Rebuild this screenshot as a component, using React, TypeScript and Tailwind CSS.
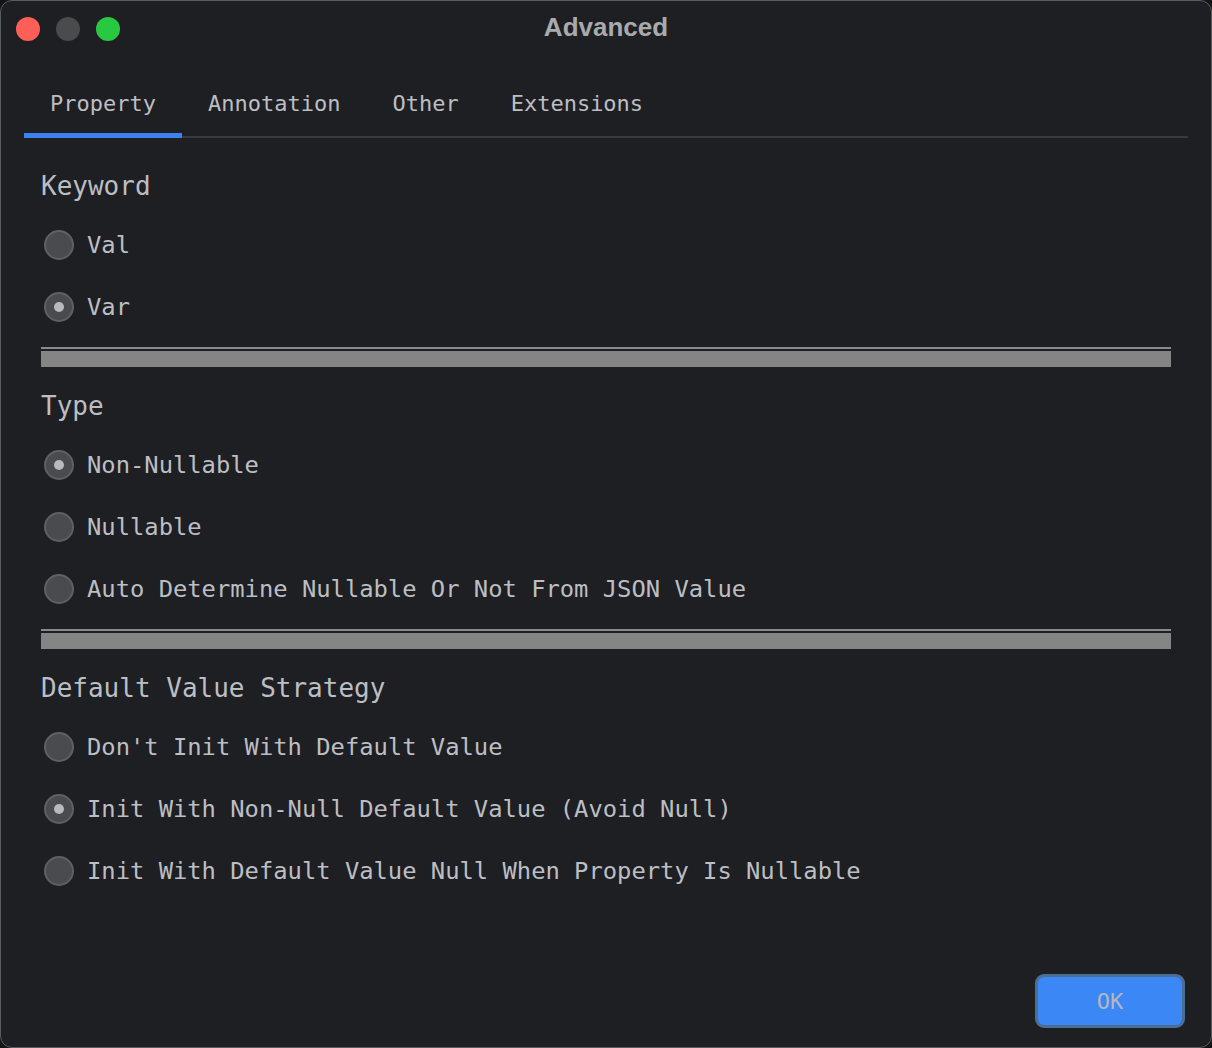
import { useState } from 'react';

const mono = { fontFamily: '"DejaVu Sans Mono", "Liberation Mono", monospace' };

type Group = { title: string; options: string[]; selected: number };

const groups: Group[] = [
  { title: 'Keyword', options: ['Val', 'Var'], selected: 1 },
  {
    title: 'Type',
    options: ['Non-Nullable', 'Nullable', 'Auto Determine Nullable Or Not From JSON Value'],
    selected: 0,
  },
  {
    title: 'Default Value Strategy',
    options: [
      "Don't Init With Default Value",
      'Init With Non-Null Default Value (Avoid Null)',
      'Init With Default Value Null When Property Is Nullable',
    ],
    selected: 1,
  },
];

function Radio({ checked, label, onClick }: { checked: boolean; label: string; onClick: () => void }) {
  return (
    <button className="flex h-[62px] items-center gap-[13px] pl-[3px] text-left" onClick={onClick} type="button">
      <span className="flex h-[30px] w-[30px] items-center justify-center rounded-full border-2 border-[#5f6064] bg-[#4a4b4e]">
        {checked && <span className="h-[10px] w-[10px] rounded-full bg-[#b9babd]" />}
      </span>
      <span className="text-[23.8px] leading-[30px] text-[#bcbec4]">{label}</span>
    </button>
  );
}

function Separator() {
  return (
    <div className="mt-[9px] mb-[23px] flex flex-col gap-[2px]">
      <div className="h-[2px] bg-[#8a8a8a]" />
      <div className="h-[16px] bg-[#858585]" />
    </div>
  );
}

export default function App() {
  const [tab, setTab] = useState('Property');
  const [picked, setPicked] = useState(groups.map((g) => g.selected));

  return (
    <div className="h-[1048px] w-full bg-[#141414]" style={mono}>
      <div className="flex h-full flex-col rounded-[12px] border border-[#5b5b5d] bg-[#1e1f22]">
        <div className="relative flex h-[55px] items-center px-[15px]">
          <div className="flex gap-[16px]">
            <span className="h-[24px] w-[24px] rounded-full bg-[#ff5f57]" />
            <span className="h-[24px] w-[24px] rounded-full bg-[#4a4b4d]" />
            <span className="h-[24px] w-[24px] rounded-full bg-[#28c840]" />
          </div>
          <div
            className="absolute inset-x-0 top-0 flex h-[53px] items-center justify-center text-[26px] font-bold text-[#a9aaad]"
            style={{ fontFamily: '"Liberation Sans", Arial, sans-serif' }}
          >
            Advanced
          </div>
        </div>

        <div className="mx-[23px] mt-[14px] flex border-b-2 border-[#393a3e]">
          {['Property', 'Annotation', 'Other', 'Extensions'].map((t) => (
            <button
              className="relative flex h-[66px] items-center px-[26px] text-[22px] text-[#bcbec4]"
              key={t}
              onClick={() => setTab(t)}
              type="button"
            >
              {t}
              {tab === t && <span className="absolute inset-x-0 -bottom-[2px] h-[5px] bg-[#3b82f0]" />}
            </button>
          ))}
        </div>

        <div className="flex-1 px-[40px] pt-[32px]">
          {groups.map((g, gi) => (
            <div key={g.title}>
              <div className="mb-[12px] h-[32px] text-[26px] leading-[32px] text-[#bcbec4]">{g.title}</div>
              <div className="flex flex-col">
                {g.options.map((o, oi) => (
                  <Radio
                    checked={picked[gi] === oi}
                    key={o}
                    label={o}
                    onClick={() => setPicked(picked.map((p, i) => (i === gi ? oi : p)))}
                  />
                ))}
              </div>
              {gi < groups.length - 1 && <Separator />}
            </div>
          ))}
        </div>

        <div className="flex justify-end pr-[26px] pb-[19px]">
          <button
            className="flex h-[54px] w-[150px] items-center justify-center rounded-[9px] border-[3px] border-[#4b6e94] bg-[#3a87f5] text-[22px] text-[#b4b8be]"
            type="button"
          >
            OK
          </button>
        </div>
      </div>
    </div>
  );
}
